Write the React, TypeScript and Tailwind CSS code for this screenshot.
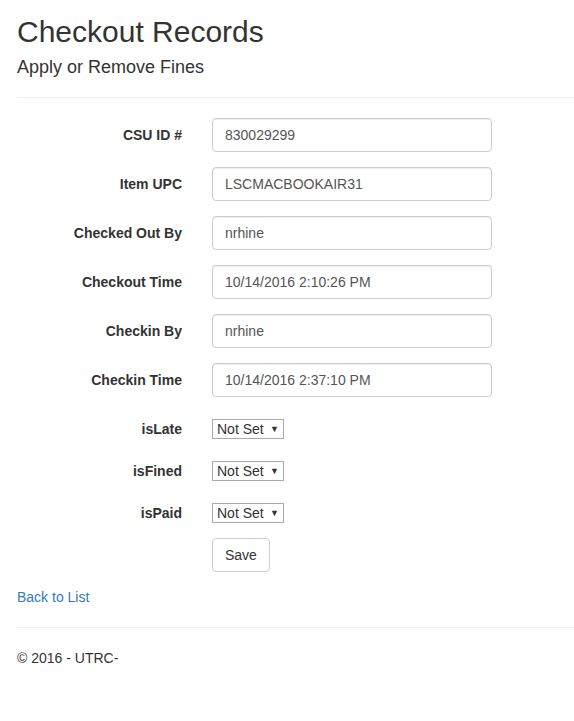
import React from "react"

const textFields = [
  { label: "CSU ID #", value: "830029299" },
  { label: "Item UPC", value: "LSCMACBOOKAIR31" },
  { label: "Checked Out By", value: "nrhine" },
  { label: "Checkout Time", value: "10/14/2016 2:10:26 PM" },
  { label: "Checkin By", value: "nrhine" },
  { label: "Checkin Time", value: "10/14/2016 2:37:10 PM" },
]

const flags = ["isLate", "isFined", "isPaid"]

function FakeSelect() {
  return (
    <div className="mt-[7px] flex h-[20px] w-[72px] items-center justify-between border border-[#a9a9a9] bg-white pl-[4px] pr-[4px] text-[14px] leading-none text-[#333]">
      <span>Not Set</span>
      <span className="text-[9px] text-[#333]">▼</span>
    </div>
  )
}

export default function App() {
  return (
    <div className="min-h-[721px] bg-white pl-[17px] text-[14px] leading-[20px] text-[#333] [font-family:'Liberation_Sans',Arial,sans-serif]">
      {/* Heading */}
      <h2 className="pt-[15px] text-[30px] leading-[33px]">Checkout Records</h2>
      <h4 className="mt-[9px] text-[18px] leading-[20px]">Apply or Remove Fines</h4>
      <hr className="mt-[20px] mb-[20px] border-0 border-t border-[#eee]" />

      {/* Form */}
      <form className="flex flex-col gap-[15px]">
        {textFields.map((f) => (
          <div key={f.label} className="flex items-start">
            <label className="w-[165px] pt-[7px] text-right font-bold">{f.label}</label>
            <input
              readOnly
              value={f.value}
              className="ml-[30px] h-[34px] w-[280px] rounded-[4px] border border-[#ccc] px-[12px] text-[14px] text-[#555] shadow-[inset_0_1px_1px_rgba(0,0,0,0.075)] outline-none"
            />
          </div>
        ))}
        {flags.map((name) => (
          <div key={name} className="flex items-start">
            <label className="w-[165px] pt-[7px] text-right font-bold">{name}</label>
            <div className="ml-[30px]">
              <FakeSelect />
            </div>
          </div>
        ))}
        <div className="flex">
          <button
            type="button"
            className="ml-[195px] h-[34px] rounded-[4px] border border-[#ccc] bg-white px-[12px] text-[14px] text-[#333]"
          >
            Save
          </button>
        </div>
      </form>

      <div className="mt-[15px]">
        <a href="#" className="text-[#337ab7]">
          Back to List
        </a>
      </div>

      {/* Footer */}
      <hr className="mt-[20px] mb-[20px] border-0 border-t border-[#eee]" />
      <p>© 2016 - UTRC-</p>
    </div>
  )
}
